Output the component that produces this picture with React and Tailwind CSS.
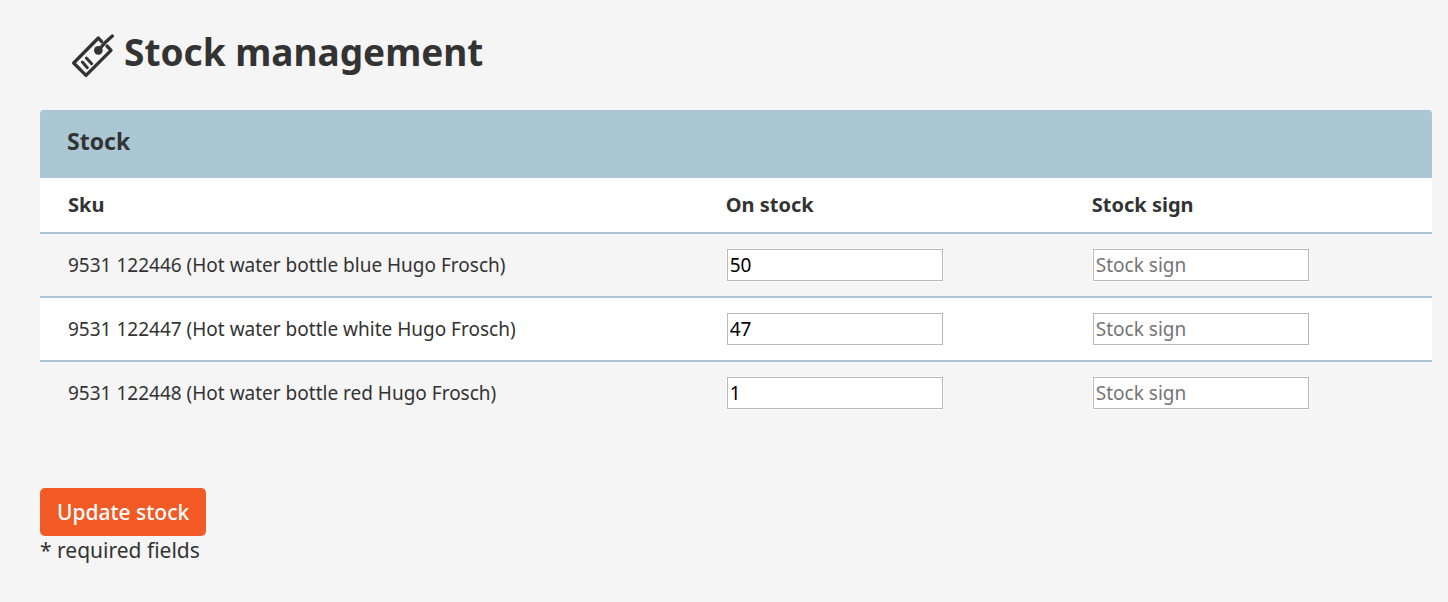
const items = [
  { sku: '9531 122446', name: 'Hot water bottle blue Hugo Frosch', stock: 50 },
  { sku: '9531 122447', name: 'Hot water bottle white Hugo Frosch', stock: 47 },
  { sku: '9531 122448', name: 'Hot water bottle red Hugo Frosch', stock: 1 },
];

function TagIcon() {
  return (
    <svg
      className="mt-1.5 size-11 shrink-0"
      viewBox="33 42 132 132"
      fill="none"
      stroke="currentColor"
      strokeWidth="10"
      strokeLinecap="round"
      strokeLinejoin="round"
      aria-hidden="true"
    >
      <path d="M125 65 115 54 41 129 78 166 153 91 141 78" />
      <path d="M115 91 137 66 157 48" />
      <path d="M67 126 82 143M79 114 95 131" strokeWidth="9" />
      <circle cx="115" cy="91" r="13" fill="currentColor" stroke="none" />
    </svg>
  );
}

const inputClass =
  'm-px block h-8 w-[216px] border border-[#b9b9b9] bg-white px-0.5 text-[19px] text-black ring-1 ring-white/70 outline-none placeholder:text-[#757575] focus:border-[#7fa9b8]';

export default function App() {
  return (
    <main className="min-h-screen bg-[#f5f5f5] pt-7 pr-4 pb-9 pl-10 font-['Noto_Sans',sans-serif] text-[#333]">
      <h1 className="flex items-start gap-[9px] pl-[31px] text-[37px] leading-[48px] font-bold">
        <TagIcon />
        Stock management
      </h1>

      <form onSubmit={(event) => event.preventDefault()}>
        <section className="mt-8">
          <h2 className="h-[68px] rounded-t bg-[#aac7d3] px-[27px] pt-[15px] text-[23px] leading-8 font-bold">
            Stock
          </h2>
          <table className="w-full table-fixed border-separate border-spacing-0 text-left">
            <thead>
              <tr className="h-14 bg-white text-xl *:border-b-2 *:border-[#aac7d3]">
                <th className="w-[47.25%] pl-7 font-bold">Sku</th>
                <th className="w-[26.3%] pl-7 font-bold">On stock</th>
                <th className="pl-7 font-bold">Stock sign</th>
              </tr>
            </thead>
            <tbody>
              {items.map((item) => (
                <tr
                  key={item.sku}
                  className="h-16 text-[19px] *:border-b-2 *:border-[#aac7d3] last:*:border-transparent even:bg-white"
                >
                  <td className="pl-7">
                    {item.sku} ({item.name})
                  </td>
                  <td className="pl-7">
                    <input
                      type="text"
                      inputMode="numeric"
                      aria-label={`On stock ${item.sku}`}
                      defaultValue={item.stock}
                      className={inputClass}
                    />
                  </td>
                  <td className="pl-7">
                    <input
                      type="text"
                      aria-label={`Stock sign ${item.sku}`}
                      placeholder="Stock sign"
                      className={inputClass}
                    />
                  </td>
                </tr>
              ))}
            </tbody>
          </table>
        </section>

        <button
          type="submit"
          className="mt-[62px] block h-12 rounded-[5px] bg-[#f15a24] px-[17px] text-[21px] leading-8 font-medium text-white"
        >
          Update stock
        </button>
        <p className="text-[21px] leading-7">* required fields</p>
      </form>
    </main>
  );
}
